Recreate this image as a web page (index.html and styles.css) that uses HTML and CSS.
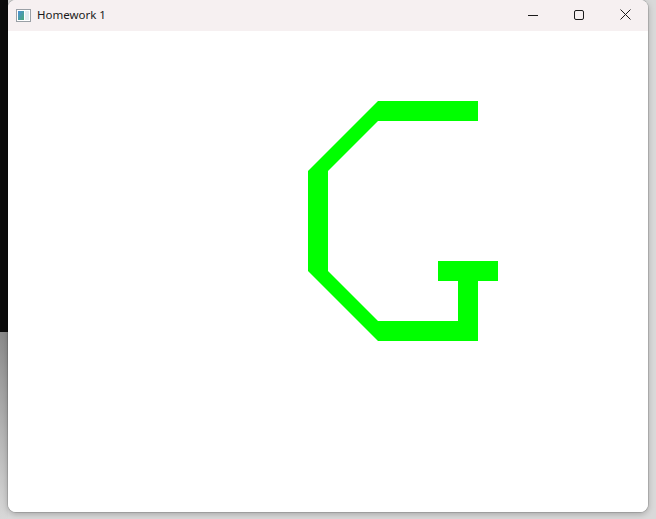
FILE: index.html
```html
<!DOCTYPE html>
<html>
<head>
<meta charset="utf-8">
<title>Homework 1</title>
<link rel="stylesheet" href="styles.css">
</head>
<body>
<div class="window">
  <div class="titlebar">
    <div class="title">
      <svg class="app-icon" width="15" height="13" viewBox="0 0 15 13">
        <defs>
          <linearGradient id="ig" x1="0" y1="0" x2="1" y2="1">
            <stop offset="0" stop-color="#4a90d8"/>
            <stop offset="1" stop-color="#4aa878"/>
          </linearGradient>
        </defs>
        <rect x="0.5" y="0.5" width="14" height="12" fill="#fff" stroke="#9aa0a6"/>
        <rect x="2" y="2" width="6" height="9" fill="url(#ig)"/>
        <rect x="9" y="2" width="4" height="9" fill="#e4ecf0"/>
      </svg>
      <span class="title-text">Homework 1</span>
    </div>
    <div class="controls">
      <div class="ctl">
        <svg width="10" height="10" viewBox="0 0 10 10"><path d="M0 5.5h10" stroke="#1a1a1a" stroke-width="1"/></svg>
      </div>
      <div class="ctl">
        <svg width="10" height="10" viewBox="0 0 10 10"><rect x="0.5" y="0.5" width="9" height="9" rx="1.5" fill="none" stroke="#1a1a1a" stroke-width="1"/></svg>
      </div>
      <div class="ctl">
        <svg width="11" height="11" viewBox="0 0 11 11"><path d="M0.5 0.5L10.5 10.5M10.5 0.5L0.5 10.5" stroke="#1a1a1a" stroke-width="1"/></svg>
      </div>
    </div>
  </div>
  <div class="client">
    <svg class="canvas" width="640" height="481" viewBox="0 0 640 481">
      <polygon fill="#00ff00" points="470,70 370,70 300,140 300,240 370,310 470,310 470,250 490,250 490,230 430,230 430,250 450,250 450,290 370,290 320,240 320,140 370,90 470,90"/>
    </svg>
  </div>
</div>
</body>
</html>
```
FILE: styles.css
```css
html, body {
  margin: 0;
  padding: 0;
}
body {
  width: 656px;
  height: 519px;
  overflow: hidden;
  background:
    linear-gradient(#0c0c0c, #0c0c0c) 0 0 / 8px 332px no-repeat,
    linear-gradient(#8a8a8a, #d8d8d8) 0 332px / 8px 187px no-repeat,
    #d9d9d9;
  font-family: "Segoe UI", "Noto Sans", "Open Sans", sans-serif;
}
.window {
  margin-left: 8px;
  width: 640px;
  height: 512px;
  background: #fff;
  border-radius: 8px;
  overflow: hidden;
  box-shadow: 0 0 0 1px rgba(0,0,0,0.12), 0 2px 6px rgba(0,0,0,0.25);
  display: flex;
  flex-direction: column;
}
.titlebar {
  height: 31px;
  flex: none;
  background: #f6f0f1;
  display: flex;
  align-items: stretch;
  justify-content: space-between;
}
.title {
  display: flex;
  align-items: center;
  padding-left: 8px;
  gap: 6px;
}
.app-icon {
  display: block;
}
.title-text {
  font-size: 11.5px;
  color: #1a1a1a;
  position: relative;
  top: -1px;
}
.controls {
  display: flex;
}
.ctl {
  width: 46px;
  display: flex;
  align-items: center;
  justify-content: center;
  position: relative;
  top: -1px;
}
.ctl svg {
  display: block;
}
.client {
  flex: 1;
  background: #fff;
}
.canvas {
  display: block;
}
```
